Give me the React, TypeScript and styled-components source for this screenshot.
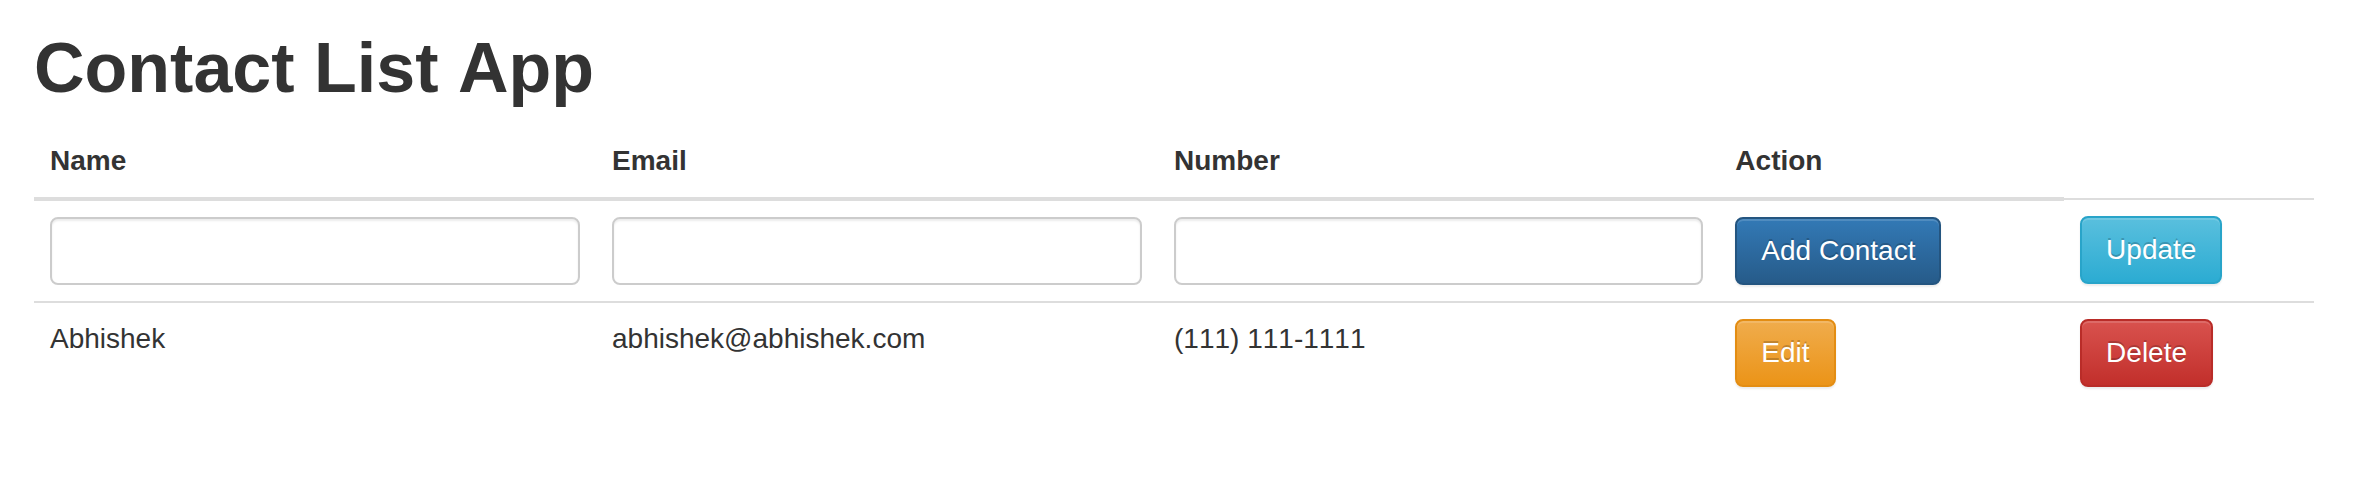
import React from "react";
import styled, { createGlobalStyle } from "styled-components";

const GlobalStyle = createGlobalStyle`
  *, *::before, *::after { box-sizing: border-box; }
  body {
    margin: 0;
    background: #fff;
    color: #333;
    font-family: "Helvetica Neue", Helvetica, "Liberation Sans", Arial, sans-serif;
    font-size: 28px;
    line-height: 40px;
    font-kerning: none;
  }
`;

const Page = styled.main`
  padding: 28px 62px 40px 34px;
`;

const Title = styled.h1`
  margin: 0 0 17px;
  font-size: 70px;
  line-height: 80px;
  font-weight: 700;
`;

const Table = styled.table`
  width: 100%;
  border-collapse: collapse;
  border-spacing: 0;
  table-layout: fixed;
`;

const Col = styled.col<{ $share: number }>`
  width: ${(p) => p.$share}%;
`;

const HeadCell = styled.th`
  padding: 16px;
  text-align: left;
  vertical-align: bottom;
  border-bottom: 4px solid #ddd;
`;

const Cell = styled.td`
  padding: 16px;
  vertical-align: top;
  border-top: 2px solid #ddd;
`;

const Field = styled.input`
  display: block;
  width: 100%;
  height: 68px;
  padding: 12px 24px;
  border: 2px solid #ccc;
  border-radius: 8px;
  background: #fff;
  color: #555;
  font: inherit;
  box-shadow: inset 0 2px 2px rgba(0, 0, 0, 0.075);
`;

const tones = {
  primary: ["#337ab7", "#265a88", "#245580"],
  info: ["#5bc0de", "#2aabd2", "#28a4c9"],
  warning: ["#f0ad4e", "#eb9316", "#e38d13"],
  danger: ["#d9534f", "#c12e2a", "#b92c28"],
};

const Button = styled.button<{ $tone: keyof typeof tones }>`
  display: inline-block;
  padding: 12px 24px;
  border: 2px solid ${(p) => tones[p.$tone][2]};
  border-radius: 8px;
  background: linear-gradient(to bottom, ${(p) => tones[p.$tone][0]}, ${(p) => tones[p.$tone][1]}) border-box;
  color: #fff;
  font: inherit;
  font-kerning: none;
  white-space: nowrap;
  vertical-align: middle;
  cursor: pointer;
  text-shadow: 0 -2px 0 rgba(0, 0, 0, 0.2);
  box-shadow: inset 0 2px 0 rgba(255, 255, 255, 0.15), 0 2px 2px rgba(0, 0, 0, 0.075);
`;

const contacts = [
  { name: "Abhishek", email: "abhishek@abhishek.com", number: "(111) 111-1111" },
];

export default function App() {
  return (
    <Page>
      <GlobalStyle />
      <Title>Contact List App</Title>
      <Table>
        <colgroup>
          <Col $share={24.65} />
          <Col $share={24.65} />
          <Col $share={24.62} />
          <Col $share={15.12} />
          <Col $share={10.96} />
        </colgroup>
        <thead>
          <tr>
            <HeadCell scope="col">Name</HeadCell>
            <HeadCell scope="col">Email</HeadCell>
            <HeadCell scope="col">Number</HeadCell>
            <HeadCell scope="col">Action</HeadCell>
          </tr>
        </thead>
        <tbody>
          <tr>
            <Cell><Field aria-label="Name" /></Cell>
            <Cell><Field type="email" aria-label="Email" /></Cell>
            <Cell><Field type="tel" aria-label="Number" /></Cell>
            <Cell><Button type="button" $tone="primary">Add Contact</Button></Cell>
            <Cell><Button type="button" $tone="info">Update</Button></Cell>
          </tr>
          {contacts.map((c) => (
            <tr key={c.email}>
              <Cell>{c.name}</Cell>
              <Cell>{c.email}</Cell>
              <Cell>{c.number}</Cell>
              <Cell><Button type="button" $tone="warning">Edit</Button></Cell>
              <Cell><Button type="button" $tone="danger">Delete</Button></Cell>
            </tr>
          ))}
        </tbody>
      </Table>
    </Page>
  );
}
